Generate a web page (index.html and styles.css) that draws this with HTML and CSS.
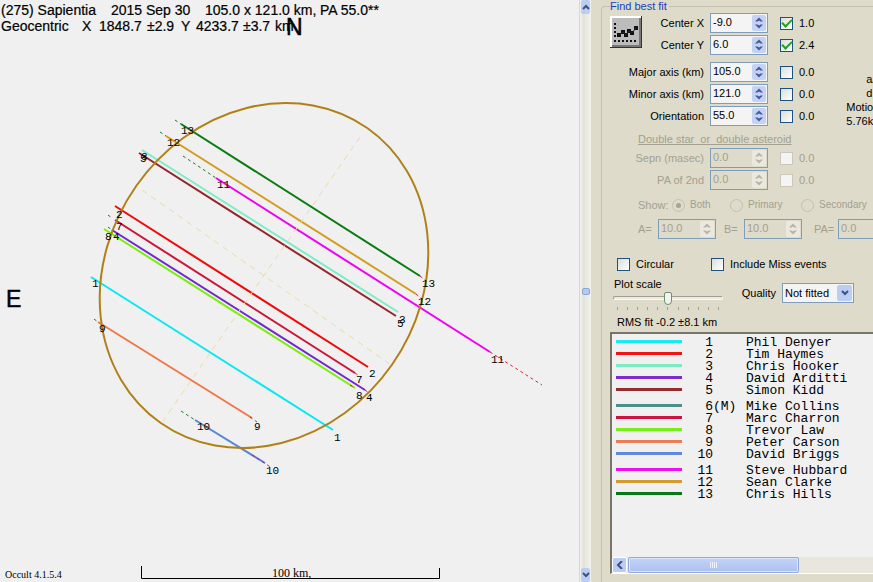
FILE: index.html
```html
<!DOCTYPE html>
<html lang="en">
<head>
<meta charset="utf-8">
<title>Occult - asteroid occultation plot</title>
<link rel="stylesheet" href="styles.css">
</head>
<body>
<svg width="0" height="0" class="defs" aria-hidden="true">
  <symbol id="chev-up" viewBox="0 0 8 6"><path d="M1 5 4 2 7 5" fill="none" stroke="#3d5280" stroke-width="2"/></symbol>
  <symbol id="chev-down" viewBox="0 0 8 6"><path d="M1 1 4 4 7 1" fill="none" stroke="#3d5280" stroke-width="2"/></symbol>
  <symbol id="spin" viewBox="0 0 8 12"><path d="M0 4.500 4 .5 8 4.500H5.500L4 3.500 2.500 4.500ZM0 7.500 4 11.500 8 7.500H5.500L4 8.500 2.500 7.500Z"/></symbol>
</svg>
<main class="app">
  <section class="plot" aria-label="Occultation chords">
    <svg viewBox="0 0 579 582" preserveAspectRatio="xMinYMin meet">
      <g class="heading">
        <text y="15"><tspan x="1">(275) Sapientia</tspan> <tspan x="111">2015</tspan> <tspan x="146">Sep 30</tspan> <tspan x="205">105.0 x 121.0 km,</tspan> <tspan x="320">PA 55.0**</tspan></text>
        <text y="31"><tspan x="1">Geocentric</tspan> <tspan x="82">X</tspan> <tspan x="99">1848.7</tspan> <tspan x="147">±2.9</tspan> <tspan x="181">Y</tspan> <tspan x="196">4233.7</tspan> <tspan x="243">±3.7</tspan> <tspan x="275">km</tspan></text>
      </g>
      <text class="compass" x="286" y="35">N</text>
      <text class="compass" x="6" y="307">E</text>
      <g class="chords">
        <path stroke="#08e8f0" d="M91 277 333 430"/>
        <path stroke="#f00808" d="M115 206 368 367"/>
        <path stroke="#7cecc8" d="M142 150 398 312"/>
        <path stroke="#7428cc" d="M112 230 365 390"/>
        <path stroke="#962428" d="M139 153 396 316"/>
        <path stroke="#cc1438" d="M115 220 355 373"/>
        <path stroke="#78f00c" d="M104 229 355 388"/>
        <path stroke="#f07848" d="M98 322 252 418"/>
        <path stroke="#5c84d8" d="M195 420 265 463"/>
        <path stroke="#f000f0" d="M216 178 490 352"/>
        <path stroke="#d49c1c" d="M166 136 416 294"/>
        <path stroke="#087c10" d="M181 124 420 276"/>
      </g>
      <g class="early">
        <path d="M175 120 181 124M160 132 166 136M183 156 216 178M108 215 112 218M94 319 98 322M181 411 195 420M108 227 112 230"/>
      </g>
      <g class="late">
        <path d="M490 352 542 385M420 276 425 280M416 294 422 299M355 373 361 377M365 390 369 393M250 417 257 422M252 455 272 468M350 385 355 388"/>
      </g>
      <g class="axes"><path d="M142 190 391 365M360 137 163 421"/></g>
      <ellipse cx="264" cy="275.500" rx="156" ry="180" transform="rotate(35 264 275.500)"/>
      <g class="marks">
        <text x="181" y="134">13</text><text x="167" y="146">12</text><text x="141" y="160">3</text><text x="140" y="162">5</text>
        <text x="217" y="188">11</text><text x="116" y="218">2</text><text x="116" y="230">7</text><text x="105" y="240">8</text>
        <text x="113" y="240">4</text><text x="92" y="287">1</text><text x="99" y="332">9</text><text x="197" y="430">10</text>
        <text x="422" y="287">13</text><text x="418" y="305">12</text><text x="399" y="323">3</text><text x="397" y="327">5</text>
        <text x="491" y="363">11</text><text x="369" y="377">2</text><text x="356" y="383">7</text><text x="356" y="399">8</text>
        <text x="366" y="401">4</text><text x="334" y="441">1</text><text x="254" y="430">9</text><text x="266" y="474">10</text>
      </g>
      <path class="scale" d="M141.500 566V578.500H439.500V568"/>
      <text class="km" x="272" y="577">100 km,</text>
      <text class="version" x="5" y="578">Occult 4.1.5.4</text>
    </svg>
  </section>

  <div class="vscroll">
    <button aria-label="Scroll up"><svg><use href="#chev-up"/></svg></button>
    <span class="grip"></span>
    <button aria-label="Scroll down"><svg><use href="#chev-down"/></svg></button>
  </div>

  <section class="panel">
    <fieldset class="group">
      <legend>Find best fit</legend>
      <div class="fit">
        <button class="plot-btn" aria-label="Plot fit">
          <svg viewBox="0 0 32 32">
            <path fill="#fff" d="M0 0H32V32H0Z"/><path fill="#333" d="M31 0H32V32H0V31H31Z"/><path fill="#777" d="M29 2H31V31H2V29H29Z"/><path fill="#bcbcbc" d="M2 2H29V29H2Z"/>
            <path fill="#111" d="M4 7h2v2H4zM4 11h2v2H4zM4 15h2v2H4zM4 19h2v2H4zM4 24h2v2H4zM8 24h2v2H8zM12 24h2v2h-2zM16 24h2v2h-2zM20 24h2v2h-2zM24 24h2v2h-2zM7 17h4v4H7zM11 14h4v4h-4zM14 17h4v4h-4zM17 13h4v4h-4zM20 15h4v4h-4zM24 10h4v4h-4z"/>
            <path d="M9 19 13 16 16 19 19 15 22 17 26 12" fill="none" stroke="#222"/>
          </svg>
        </button>
        <div class="params">
          <div class="row"><label for="cx">Center X</label><span class="spin"><input id="cx" value="-9.0"><button aria-label="Step"><svg><use href="#spin"/></svg></button></span><input type="checkbox" id="kx" checked><label for="kx">1.0</label></div>
          <div class="row"><label for="cy">Center Y</label><span class="spin"><input id="cy" value="6.0"><button aria-label="Step"><svg><use href="#spin"/></svg></button></span><input type="checkbox" id="ky" checked><label for="ky">2.4</label></div>
          <div class="row gap"><label for="ma">Major axis (km)</label><span class="spin"><input id="ma" value="105.0"><button aria-label="Step"><svg><use href="#spin"/></svg></button></span><input type="checkbox" id="kma"><label for="kma">0.0</label></div>
          <div class="row"><label for="mi">Minor axis (km)</label><span class="spin"><input id="mi" value="121.0"><button aria-label="Step"><svg><use href="#spin"/></svg></button></span><input type="checkbox" id="kmi"><label for="kmi">0.0</label></div>
          <div class="row"><label for="or">Orientation</label><span class="spin"><input id="or" value="55.0"><button aria-label="Step"><svg><use href="#spin"/></svg></button></span><input type="checkbox" id="kor"><label for="kor">0.0</label></div>
        </div>
        <div class="motion"><span class="mid">a/</span><span class="mid">d</span><span>Motion</span><span>5.76km</span></div>
      </div>

      <div class="double">
        <h2>Double star&nbsp; or&nbsp; double asteroid</h2>
        <div class="row"><label for="se">Sepn (masec)</label><span class="spin"><input id="se" value="0.0" disabled><button disabled aria-label="Step"><svg><use href="#spin"/></svg></button></span><input type="checkbox" id="kse" disabled><label for="kse">0.0</label></div>
        <div class="row"><label for="pa2">PA of 2nd</label><span class="spin"><input id="pa2" value="0.0" disabled><button disabled aria-label="Step"><svg><use href="#spin"/></svg></button></span><input type="checkbox" id="kpa" disabled><label for="kpa">0.0</label></div>
        <div class="show"><span>Show:</span>
          <label><input type="radio" name="show" checked disabled>Both</label>
          <label><input type="radio" name="show" disabled>Primary</label>
          <label><input type="radio" name="show" disabled>Secondary</label>
        </div>
        <div class="solution">
          <label for="sa">A=</label><span class="spin"><input id="sa" value="10.0" disabled><button disabled aria-label="Step"><svg><use href="#spin"/></svg></button></span>
          <label for="sb">B=</label><span class="spin"><input id="sb" value="10.0" disabled><button disabled aria-label="Step"><svg><use href="#spin"/></svg></button></span>
          <label for="sp">PA=</label><span class="spin"><input id="sp" value="0.0" disabled><button disabled aria-label="Step"><svg><use href="#spin"/></svg></button></span>
        </div>
      </div>

      <div class="options">
        <label><input type="checkbox">Circular</label>
        <label><input type="checkbox">Include Miss events</label>
      </div>
      <div class="view">
        <div class="zoom">
          <label for="ps">Plot scale</label>
          <input type="range" id="ps" min="0" max="10" value="5">
          <div class="ticks"><i></i><i></i><i></i><i></i><i></i><i></i><i></i><i></i><i></i><i></i><i></i></div>
        </div>
        <div class="quality">
          <label for="q">Quality</label>
          <span class="combo"><select id="q"><option>Not fitted</option></select><span class="drop"><svg><use href="#chev-down"/></svg></span></span>
        </div>
      </div>
      <p class="rms">RMS fit -0.2 ±8.1 km</p>

      <div class="list">
        <ul>
          <li class="c1"><i></i><b>1</b><span></span><span>Phil Denyer</span></li>
          <li class="c2"><i></i><b>2</b><span></span><span>Tim Haymes</span></li>
          <li class="c3"><i></i><b>3</b><span></span><span>Chris Hooker</span></li>
          <li class="c4"><i></i><b>4</b><span></span><span>David Arditti</span></li>
          <li class="c5"><i></i><b>5</b><span></span><span>Simon Kidd</span></li>
          <li class="c6 gap"><i></i><b>6</b><span>(M)</span><span>Mike Collins</span></li>
          <li class="c7"><i></i><b>7</b><span></span><span>Marc Charron</span></li>
          <li class="c8"><i></i><b>8</b><span></span><span>Trevor Law</span></li>
          <li class="c9"><i></i><b>9</b><span></span><span>Peter Carson</span></li>
          <li class="c10"><i></i><b>10</b><span></span><span>David Briggs</span></li>
          <li class="c11 gap"><i></i><b>11</b><span></span><span>Steve Hubbard</span></li>
          <li class="c12"><i></i><b>12</b><span></span><span>Sean Clarke</span></li>
          <li class="c13"><i></i><b>13</b><span></span><span>Chris Hills</span></li>
        </ul>
        <div class="hscroll">
          <button aria-label="Scroll left"><svg viewBox="0 0 8 8"><path d="M6 0 2 4 6 8" fill="none" stroke="#3d5280" stroke-width="2"/></svg></button>
          <span class="thumb"><i></i><i></i><i></i><i></i></span>
        </div>
      </div>
    </fieldset>
  </section>
</main>
</body>
</html>
```
FILE: styles.css
```css
* { box-sizing: border-box; }
body {
  margin: 0;
  background: #f0f0f0;
  color: #000;
  font: 11px/14px "Liberation Sans", Arial, sans-serif;
  overflow: hidden;
}
.defs { position: absolute; }
button { padding: 0; border: 0; font: inherit; }
.app {
  display: grid;
  grid-template-columns: minmax(0, 1fr) 12px 282px;
  height: 100vh;
}

/* Plot */
.plot { overflow: hidden; }
.plot svg { display: block; width: 100%; }
.heading { font-size: 14px; stroke: #000; stroke-width: .2; }
.compass { font-size: 23px; stroke: #000; stroke-width: .5; }
.chords { fill: none; stroke-width: 2; }
.early { fill: none; stroke: #187c30; stroke-dasharray: 3 3; }
.late { fill: none; stroke: #e02030; stroke-dasharray: 3 3; }
.axes { fill: none; stroke: #ecdca4; stroke-dasharray: 6 5; }
ellipse { fill: none; stroke: #b08018; stroke-width: 2; }
.marks { font: 11px "Liberation Mono", monospace; }
.scale { fill: none; stroke: #000; }
.km { font: 12px "Liberation Serif", serif; }
.version { font: 10px "Liberation Serif", serif; }

/* Divider scroll bar */
.vscroll {
  display: flex;
  flex-direction: column;
  justify-content: space-between;
  align-items: center;
  border-left: 1px solid #d8d8d0;
  background: linear-gradient(90deg, #f4f4f0, #e4e3da 30%, #f2f2ec);
}
.vscroll button {
  display: grid;
  place-items: center;
  width: 9px;
  height: 14px;
  border-radius: 2px;
  background: #bccdf4;
}
.vscroll svg { width: 8px; height: 6px; }
.grip { width: 8px; height: 7px; border: 1px solid #8ca4dc; border-radius: 2px; background: #b8c8f0; }

/* Side panel */
.panel { display: flex; padding-left: 10px; background: #dedbca; overflow: hidden; }
.group {
  flex: 1;
  display: flex;
  flex-direction: column;
  min-width: 0;
  margin: 0;
  padding: 0 0 8px 8px;
  border: 1px solid #c4c1b0;
  border-width: 1px 0 0 1px;
  border-radius: 4px 0 0 0;
}
legend { height: 12px; padding: 0 2px 0 0; color: #1840c0; line-height: 12px; }
.fit { display: flex; }
.plot-btn { width: 32px; height: 32px; margin-top: 4px; background: none; }
.plot-btn svg { display: block; width: 32px; height: 32px; }
.row {
  display: grid;
  grid-template-columns: 94px 58px 13px auto;
  column-gap: 6px;
  align-items: center;
  height: 22px;
}
.params .row { grid-template-columns: 62px 58px 13px auto; }
.row label:first-child { justify-self: end; white-space: nowrap; }
.row input[type="checkbox"] { margin: 0 0 0 6px; }
.row label:last-child { margin-left: 6px; }
.row.gap { margin-top: 5px; }
.spin { display: flex; width: 58px; height: 20px; padding: 1px; border: 1px solid #7f9db9; background: #f4f4f4; }
.spin input { flex: 1; min-width: 0; padding: 0 0 2px 1px; border: 0; background: none; color: #000; font: inherit; }
.spin button { display: grid; place-items: center; width: 14px; border-radius: 2px; background: #c4d2f6; }
.spin svg { width: 8px; height: 12px; fill: #465a94; }
input[type="checkbox"] {
  appearance: none;
  flex: none;
  display: grid;
  place-items: center;
  width: 13px;
  height: 13px;
  margin: 0;
  border: 1px solid #1c5180;
  background: linear-gradient(135deg, #dcdcd7, #fff);
}
input[type="checkbox"]:checked::before {
  content: "";
  width: 8px;
  height: 4px;
  margin-bottom: 2px;
  border: solid #21a121;
  border-width: 0 0 2px 2px;
  transform: rotate(-45deg);
}
input[type="checkbox"]:disabled { border-color: #cac8bb; background: #f4f4f4; }
.motion { margin: 60px 0 0 32px; white-space: nowrap; }
.motion span { display: block; }
.motion .mid { padding-left: 20px; }

.double { color: #a3a08f; }
h2 { margin: 4px 0 1px 28px; font-size: 11px; font-weight: 400; line-height: 14px; text-decoration: underline; }
.double .spin { background: #dedbca; }
.double .spin input { color: #a3a08f; }
.double .spin button { background: #ebe9df; }
.double .spin svg { fill: #b6b4a6; }
.show { display: flex; align-items: center; margin: 7px 0 0 28px; height: 14px; white-space: nowrap; }
.show label { display: flex; align-items: center; gap: 5px; width: 58px; font-size: 10px; }
.show span { width: 34px; }
.show label + label { width: 71px; }
input[type="radio"] {
  appearance: none;
  display: grid;
  place-items: center;
  width: 13px;
  height: 13px;
  margin: 0;
  border: 1px solid #c4c1b0;
  border-radius: 50%;
}
input[type="radio"]:checked::before { content: ""; width: 5px; height: 5px; border-radius: 50%; background: #a8a594; }
.solution { display: flex; align-items: center; margin: 7px 0 0 28px; height: 20px; }
.solution label { flex: none; width: 20px; }
.solution .spin { flex: none; margin-right: 8px; }
.solution label:nth-of-type(3) { width: 24px; margin-left: 4px; }

.options { display: flex; margin: 18px 0 0 7px; height: 14px; }
.options label { flex: none; display: flex; align-items: center; gap: 6px; width: 94px; white-space: nowrap; }
.view { display: flex; justify-content: space-between; margin: 6px 19px 0 3px; }
.zoom { width: 110px; }
.zoom label { display: block; padding-left: 1px; }
input[type="range"] { appearance: none; display: block; width: 110px; height: 14px; margin: 0; background: none; }
input[type="range"]::-webkit-slider-runnable-track { height: 4px; border: 1px solid #a8a698; border-color: #a09e90 #f8f8f4 #f8f8f4 #a09e90; border-radius: 2px; background: #eceae0; }
input[type="range"]::-webkit-slider-thumb { appearance: none; width: 8px; height: 13px; margin-top: -5px; border: 1px solid #6c9070; border-radius: 2px 2px 4px 4px; background: #f2f2ee; }
.ticks { display: flex; justify-content: space-between; padding: 2px 4px 0; }
.ticks i { width: 1px; height: 3px; background: #a3a08f; }
.quality { display: flex; align-items: center; gap: 6px; height: 20px; margin-top: 6px; }
.combo { display: grid; width: 72px; height: 20px; }
.combo select { grid-area: 1 / 1; appearance: none; padding: 0 0 0 2px; border: 1px solid #7f9db9; border-radius: 0; background: #f4f4f4; color: #000; font: inherit; }
.drop { grid-area: 1 / 1; justify-self: end; display: grid; place-items: center; width: 15px; margin: 2px; border-radius: 2px; background: #bccdf4; pointer-events: none; }
.drop svg { width: 8px; height: 6px; }
.rms { margin: 5px 0 3px 7px; }

/* Observer list */
.list {
  flex: 1;
  display: flex;
  flex-direction: column;
  justify-content: space-between;
  border: solid #77756a;
  border-width: 2px 0 0 2px;
  border-bottom: 1px solid #fff;
  background: #f0f0f0;
}
ul { margin: 0; padding: 3px 0 0 4px; list-style: none; font: 13px/12px "Liberation Mono", monospace; }
li { display: grid; grid-template-columns: 66px 31px 33px auto; height: 12px; white-space: nowrap; }
li.gap { margin-top: 4px; }
li i { height: 3px; margin-top: 3px; background: currentColor; }
li b { font-weight: 400; text-align: right; color: #000; }
li span { color: #000; }
.c1 { color: #18ecf0; } .c2 { color: #f01414; } .c3 { color: #7cecc4; } .c4 { color: #7c2ccc; }
.c5 { color: #942c30; } .c6 { color: #4c908c; } .c7 { color: #cc1440; } .c8 { color: #78ee18; }
.c9 { color: #ec7c54; } .c10 { color: #6088dc; } .c11 { color: #ee10ee; } .c12 { color: #d49c30; } .c13 { color: #087818; }
.hscroll { display: flex; gap: 1px; height: 16px; background: #e8e7de; }
.hscroll button { display: grid; place-items: center; width: 15px; border: 1px solid #fff; border-radius: 2px; background: #bccdf4; }
.hscroll svg { width: 8px; height: 8px; }
.thumb { display: flex; align-items: center; justify-content: center; gap: 1px; width: 171px; border: 1px solid #8ea8e0; border-radius: 2px; box-shadow: inset 0 0 0 1px #dce6fc; background: linear-gradient(#c4d4f8, #acc0ee); }
.thumb i { width: 1px; height: 6px; background: #eef2fe; }
```
